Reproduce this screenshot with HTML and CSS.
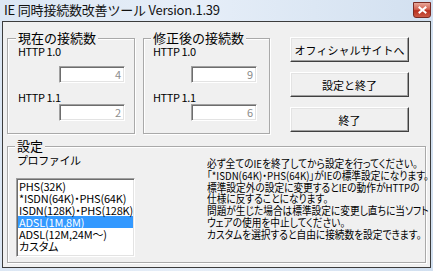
FILE: index.html
```html
<!DOCTYPE html>
<html lang="ja">
<head>
    <meta charset="UTF-8">
    <meta name="viewport" content="width=device-width, initial-scale=1.0">
    <title>IE 同時接続数改善ツール</title>
    <link rel="stylesheet" href="styles.css">
</head>
<body>
    <div class="window">
        <div class="titlebar">
            <span class="title">IE 同時接続数改善ツール Version.1.39</span>
            <span class="close">
                <svg width="9" height="8" viewBox="0 0 9 8"><path d="M1.5 1.5L7.5 6.5M7.5 1.5L1.5 6.5" stroke="#fff" stroke-width="2" stroke-linecap="square"/></svg>
            </span>
        </div>
        <div class="client">
            <div class="top-row">
                <div class="group group-current">
                    <span class="group-title">現在の接続数</span>
                    <div class="field-label first">HTTP 1.0</div>
                    <div class="textbox">4</div>
                    <div class="field-label">HTTP 1.1</div>
                    <div class="textbox">2</div>
                </div>
                <div class="group group-fixed">
                    <span class="group-title">修正後の接続数</span>
                    <div class="field-label first">HTTP 1.0</div>
                    <div class="textbox">9</div>
                    <div class="field-label">HTTP 1.1</div>
                    <div class="textbox">6</div>
                </div>
                <div class="buttons">
                    <button>オフィシャルサイトへ</button>
                    <button>設定と終了</button>
                    <button>終了</button>
                </div>
            </div>
            <div class="group group-settings">
                <span class="group-title">設定</span>
                <div class="settings-body">
                    <div class="profile">
                        <div class="field-label first">プロファイル</div>
                        <ul class="listbox">
                            <li>PHS(32K)</li>
                            <li>*ISDN(64K)・PHS(64K)</li>
                            <li>ISDN(128K)・PHS(128K)</li>
                            <li class="selected">ADSL(1M,8M)</li>
                            <li>ADSL(12M,24M～)</li>
                            <li>カスタム</li>
                        </ul>
                    </div>
                    <p class="notes">
                        必ず全てのIEを終了してから設定を行ってください。<br>
                        「*ISDN(64K)・PHS(64K)」がIEの標準設定になります。<br>
                        標準設定外の設定に変更するとIEの動作がHTTPの<br>
                        仕様に反することになります。<br>
                        問題が生じた場合は標準設定に変更し直ちに当ソフト<br>
                        ウェアの使用を中止してください。<br>
                        カスタムを選択すると自由に接続数を設定できます。
                    </p>
                </div>
            </div>
        </div>
    </div>
</body>
</html>
```

FILE: styles.css
```css
body {
    margin: 0;
    font-family: "Noto Sans CJK JP", sans-serif;
    color: #000;
}

.window {
    width: 433px;
    height: 271px;
    box-sizing: border-box;
    padding: 0 2px 3px 2px;
    display: flex;
    flex-direction: column;
    background: linear-gradient(90deg, #dce7f4 0%, #e6eef8 45%, #d2e0f0 100%);
}

.titlebar {
    height: 21px;
    display: flex;
    align-items: flex-start;
}
.title {
    padding: 2px 0 0 2px;
    font-size: 13px;
    line-height: 16px;
    letter-spacing: -0.2px;
    color: #111;
}
.close {
    margin: 2px 0 0 auto;
    width: 18px;
    height: 16px;
    box-sizing: border-box;
    display: flex;
    align-items: center;
    justify-content: center;
    border: 1px solid #7a2a22;
    border-radius: 0 0 3px 3px;
    background: linear-gradient(#e8a89a 0%, #d2604f 45%, #b8301f 55%, #cc5a45 100%);
}

.client {
    flex: 1;
    border: 1px solid #3c3c3c;
    background: #f0f0f0;
    padding: 16px 0 0 4px;
}

.top-row {
    display: flex;
    align-items: flex-start;
}

/* group box: etched border with the caption sitting on the top line */
.group {
    box-sizing: border-box;
    border: 1px solid #a9a9a9;
    box-shadow: inset 1px 1px 0 #fff, 1px 1px 0 #fff;
}
.group-title {
    display: table;
    margin: -9px 0 0 -2px;
    padding: 0 2px;
    font-size: 13px;
    line-height: 16px;
    background: #f0f0f0;
}

.group-current {
    width: 128px;
    height: 96px;
    padding-left: 10px;
}
.group-fixed {
    width: 127px;
    height: 96px;
    margin-left: 8px;
    padding-left: 9px;
}
.group-current .textbox {
    margin-left: 41px;
}
.group-fixed .textbox {
    margin-left: 38px;
}

.field-label {
    font-size: 11px;
    line-height: 14px;
    letter-spacing: -0.4px;
    margin-top: 7px;
}
.field-label.first {
    margin-top: -2px;
}

.textbox {
    width: 66px;
    height: 17px;
    box-sizing: border-box;
    margin-top: 8px;
    padding-right: 3px;
    border: 1px solid;
    border-color: #a0a0a0 #fff #fff #a0a0a0;
    box-shadow: inset 1px 1px 0 #6d6d6d, inset -1px -1px 0 #e3e3e3;
    background: #fff;
    color: #8c8c8c;
    font-size: 11px;
    line-height: 15px;
    text-align: right;
}
.textbox:last-child {
    margin-top: 0;
}

.buttons {
    margin: -1px 0 0 20px;
    display: flex;
    flex-direction: column;
    gap: 10px;
}
.buttons button {
    width: 119px;
    height: 25px;
    padding: 0;
    font-family: inherit;
    font-size: 11px;
    color: #000;
    background: #f0f0f0;
    border: 1px solid;
    border-color: #fff #404040 #404040 #fff;
    box-shadow: inset -1px -1px 0 #a0a0a0, inset 1px 1px 0 #e3e3e3;
}

.group-settings {
    width: 419px;
    height: 117px;
    margin-top: 12px;
    padding-left: 9px;
}

.settings-body {
    display: flex;
    align-items: flex-start;
}

.profile .field-label {
    margin-top: -1px;
}

.listbox {
    list-style: none;
    margin: 11px 0 0 -1px;
    width: 119px;
    height: 79px;
    box-sizing: border-box;
    border: 1px solid;
    border-color: #a0a0a0 #fff #fff #a0a0a0;
    box-shadow: inset 1px 1px 0 #6d6d6d, inset -1px -1px 0 #e3e3e3;
    background: #fff;
    padding: 1px;
    overflow: hidden;
}
.listbox li {
    height: 12px;
    line-height: 12px;
    font-size: 11px;
    letter-spacing: -0.2px;
    font-feature-settings: "palt";
    padding-left: 1px;
    white-space: nowrap;
}
.listbox li.selected {
    background: #3399ff;
    color: #fff;
}

.notes {
    margin: 4px 0 0 72px;
    font-size: 11px;
    line-height: 11.8px;
    font-feature-settings: "palt";
    white-space: nowrap;
    transform: scaleX(0.88);
    transform-origin: left top;
}
```
